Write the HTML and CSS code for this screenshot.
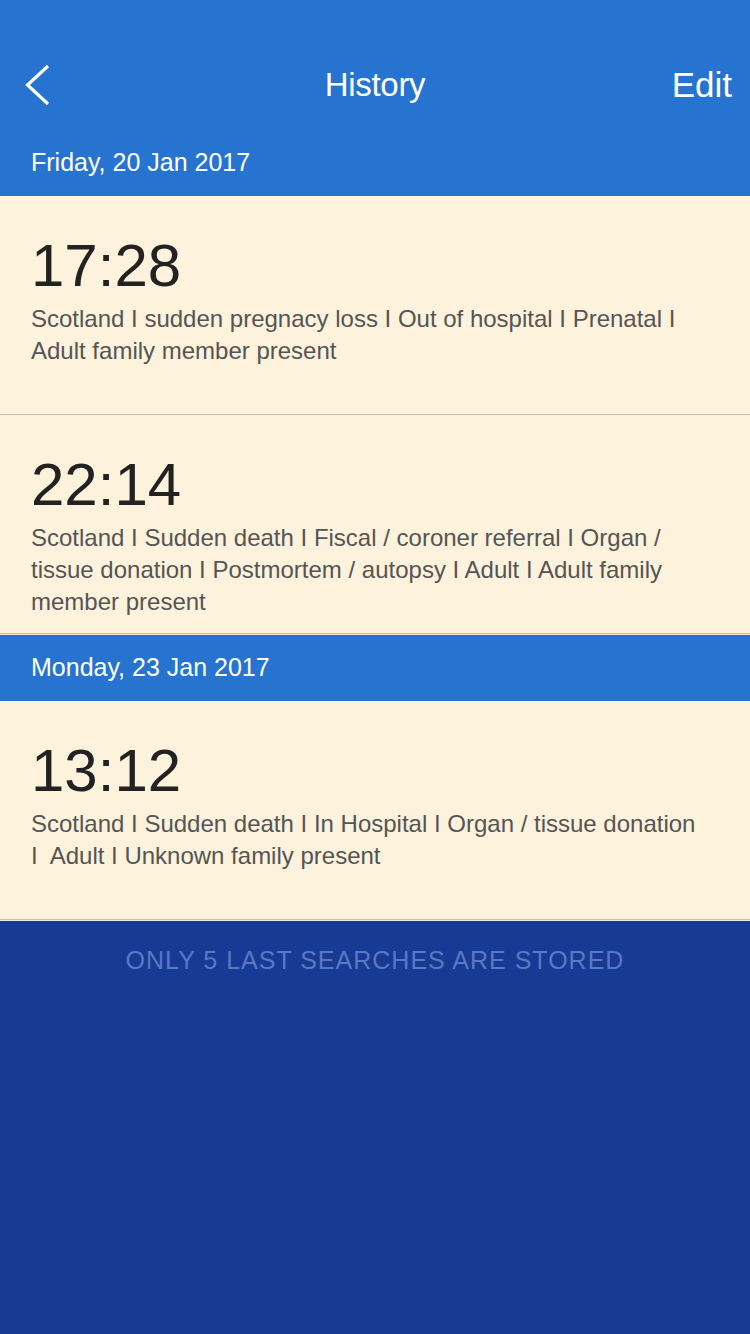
FILE: index.html
```html
<!DOCTYPE html>
<html lang="en">
<head>
<meta charset="utf-8">
<title>History</title>
<link rel="stylesheet" href="styles.css">
</head>
<body>
<div class="screen">
  <header class="topbar">
    <nav class="navbar">
      <div class="nav-left">
        <svg class="back" width="28" height="44" viewBox="0 0 28 44" aria-label="Back">
          <path d="M24 3 L3.5 22 L24 41" fill="none" stroke="#ffffff" stroke-width="3.2" stroke-linecap="butt" stroke-linejoin="miter"/>
        </svg>
      </div>
      <h1 class="nav-title">History</h1>
      <div class="nav-right"><span class="edit">Edit</span></div>
    </nav>
  </header>

  <section class="day">
    <div class="day-label">Friday, 20 Jan 2017</div>
    <div class="entry">
      <div class="time">17:28</div>
      <p class="desc">Scotland I sudden pregnacy loss I Out of hospital I Prenatal I Adult family member present</p>
    </div>
    <div class="entry">
      <div class="time">22:14</div>
      <p class="desc">Scotland I Sudden death I Fiscal / coroner referral I Organ / tissue donation I Postmortem / autopsy I Adult I Adult family member present</p>
    </div>
  </section>

  <section class="day">
    <div class="day-label">Monday, 23 Jan 2017</div>
    <div class="entry">
      <div class="time">13:12</div>
      <p class="desc">Scotland I Sudden death I In Hospital I Organ / tissue donation I&nbsp; Adult I Unknown family present</p>
    </div>
  </section>

  <p class="note">ONLY 5 LAST SEARCHES ARE STORED</p>
</div>
</body>
</html>
```

FILE: styles.css
```css
* { box-sizing: border-box; }

html, body {
  margin: 0;
  padding: 0;
  background: #173a95;
}

body {
  font-family: "Liberation Sans", Arial, Helvetica, sans-serif;
  -webkit-font-smoothing: antialiased;
}

.screen {
  width: 750px;
  min-height: 1334px;
  background: #173a95;
  display: flex;
  flex-direction: column;
}

.topbar {
  background: #2774d0;
  padding-top: 40px;
}

.navbar {
  height: 90px;
  display: grid;
  grid-template-columns: 1fr auto 1fr;
  align-items: center;
}

.nav-left {
  display: flex;
  align-items: center;
  padding-left: 24px;
}

.back { display: block; }

.nav-title {
  margin: 0;
  font-weight: normal;
  font-size: 33px;
  color: #ffffff;
  letter-spacing: -0.3px;
}

.nav-right {
  display: flex;
  justify-content: flex-end;
  padding-right: 18px;
}

.edit {
  font-size: 35px;
  color: #ffffff;
}

.day-label {
  background: #2774d0;
  color: #ffffff;
  height: 66px;
  line-height: 64px;
  font-size: 25px;
  padding-left: 31px;
}

.entry {
  background: #fdf2dc;
  height: 219px;
  border-bottom: 1px solid #c8c0b2;
  padding: 40px 48px 0 31px;
}

.entry:last-child {
  box-shadow: 0 1px 0 #ece8df;
  margin-bottom: 1px;
}

.time {
  font-size: 60px;
  line-height: 60px;
  color: #222222;
}

.desc {
  margin: 7px 0 0;
  font-size: 24px;
  line-height: 32px;
  color: #555555;
}

.note {
  margin: 0;
  padding-top: 22px;
  line-height: 34px;
  font-size: 25px;
  letter-spacing: 1px;
  text-align: center;
  color: #5b78c2;
}
```
